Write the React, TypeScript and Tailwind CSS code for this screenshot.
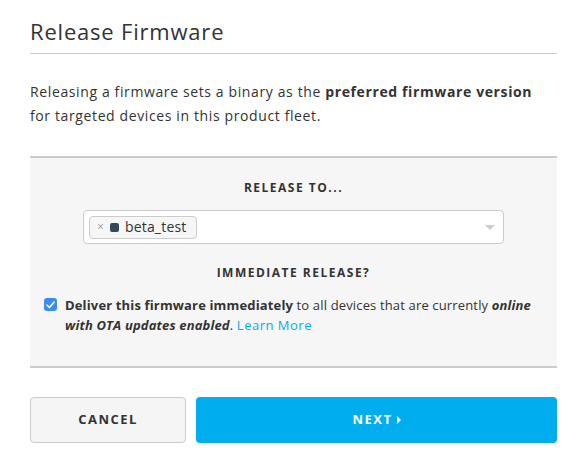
export default function App() {
  return (
    <div className="w-[587px] h-[463px] bg-white px-[30px] text-[#333] font-['Open_Sans',sans-serif]">
      <h1 className="pt-[17px] pb-[8px] text-[22px] leading-[28px] font-normal border-b border-[#ccc] tracking-[0.8px]">
        Release Firmware
      </h1>

      <p className="mt-[26px] text-[14px] leading-[24px] tracking-[0.62px]">
        Releasing a firmware sets a binary as the{" "}
        <b className="font-bold">preferred firmware version</b> for targeted devices in this product fleet.
      </p>

      <div className="mt-[28px] bg-[#f6f6f6] border-t-2 border-b-2 border-[#ccc] pt-[21px] pb-[31px] px-[14px]">
        <div className="text-center text-[12px] leading-[18px] font-bold tracking-[1.5px] text-[#333]">
          RELEASE TO...
        </div>
        <div className="mt-[13px] mx-[39px] h-[34px] bg-white border border-[#ccc] rounded-[4px] flex items-center px-[5px]">
          <div className="h-[23px] flex items-center gap-[6px] border border-[#ccc] rounded-[4px] bg-[#f6f6f6] pl-[7px] pr-[9px]">
            <span className="text-[12px] text-[#999] leading-none">×</span>
            <span className="w-[9px] h-[9px] rounded-[2px] bg-[#34495e]" />
            <span className="text-[14px] leading-none tracking-[0.2px]">beta_test</span>
          </div>
          <div className="ml-auto mr-[3px] w-0 h-0 border-l-[5px] border-r-[5px] border-t-[5px] border-l-transparent border-r-transparent border-t-[#ccc]" />
        </div>

        <div className="mt-[20px] text-center text-[12px] leading-[18px] font-bold tracking-[1.5px] text-[#333]">
          IMMEDIATE RELEASE?
        </div>
        <div className="mt-[13px] flex gap-[8px]">
          <span className="mt-[3px] shrink-0 w-[13px] h-[13px] rounded-[3px] bg-[#3b8bf5] flex items-center justify-center">
            <svg width="9" height="8" viewBox="0 0 9 8" fill="none">
              <path d="M1 4.2 L3.4 6.5 L8 1.2" stroke="white" strokeWidth="1.6" strokeLinecap="round" strokeLinejoin="round" />
            </svg>
          </span>
          <p className="text-[13px] leading-[20px] tracking-[0.15px]">
            <b className="font-bold">Deliver this firmware immediately</b> to all devices that are currently{" "}
            <b className="font-bold italic">online with OTA updates enabled</b>.{" "}
            <span className="text-[#00acee] tracking-[0.5px]">Learn More</span>
          </p>
        </div>
      </div>

      <div className="mt-[29px] flex gap-[10px]">
        <button className="w-[156px] h-[46px] bg-[#f5f5f5] border border-[#ccc] rounded-[4px] text-[13px] font-bold tracking-[1.5px] text-[#333]">
          CANCEL
        </button>
        <button className="flex-1 h-[46px] bg-[#00aeef] rounded-[4px] text-[13px] font-bold tracking-[1.5px] text-white flex items-center justify-center gap-[4px]">
          NEXT
          <span className="w-0 h-0 border-t-[4px] border-b-[4px] border-l-[4px] border-t-transparent border-b-transparent border-l-white" />
        </button>
      </div>
    </div>
  );
}
